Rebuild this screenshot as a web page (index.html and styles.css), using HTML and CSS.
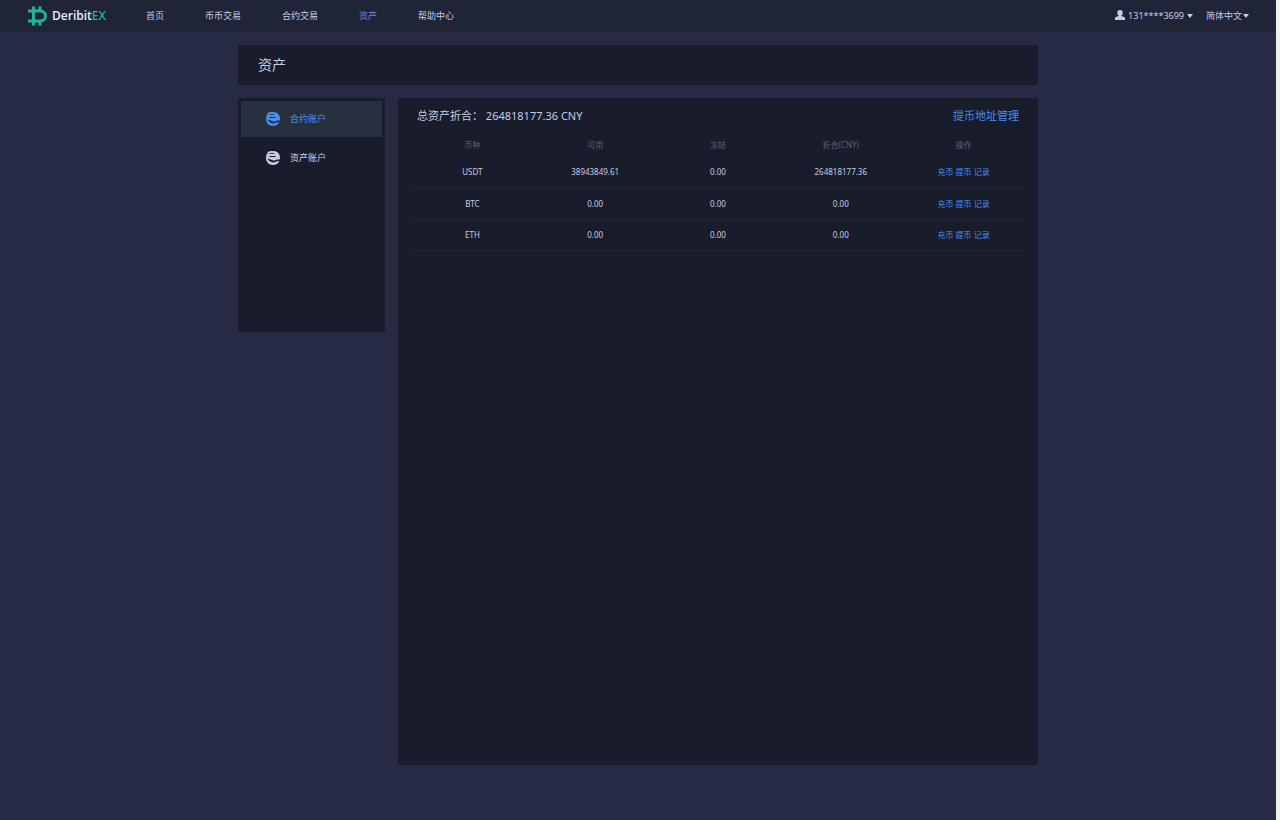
FILE: index.html
```html
<!DOCTYPE html>
<html lang="zh-CN">
<head>
<meta charset="utf-8">
<title>资产 - DeribitEX</title>
<link rel="stylesheet" href="styles.css">
</head>
<body>
<svg class="sprite" aria-hidden="true">
  <symbol id="coin" viewBox="0 0 14 14">
    <path fill="currentColor" fill-rule="evenodd" d="M1.500 1C3.500 0 6 0 8 .1c3.500.3 5.900 3 6 6.700L13.800 8.600 11.500 8.400C10 8.600 9.300 9.600 7.800 9.500 6.500 9.400 5.400 8.400 3.800 8.200L1.500 7.600ZM3.400 2.200v.8h5V2.200ZM3.400 5.100v.8h6.200V5.100Z"/>
    <path fill="currentColor" d="M.3 3.500 1.800 2.500V8C2.600 9.600 4.400 11.400 7 11.400c2 0 3-1.100 4.400-1.200h2C12.300 12.500 10.100 14 7 14 3 14 0 11 0 7Z"/>
  </symbol>
</svg>
<header class="topbar">
  <a class="logo" href="#">
    <svg class="logo-mark" viewBox="0 0 20 20" aria-hidden="true">
      <path fill="none" stroke="currentColor" stroke-width="3" d="M0 5h12.500a5 5 0 0 1 0 10H0M5.500 .5v19M12 .5v4M12 15.500v4"/>
    </svg>
    <span class="logo-text">Deribit<span class="logo-ex">EX</span></span>
  </a>
  <nav class="nav">
    <a href="#">首页</a>
    <a href="#">币币交易</a>
    <a href="#">合约交易</a>
    <a class="active" href="#">资产</a>
    <a href="#">帮助中心</a>
  </nav>
  <div class="tools">
    <button class="tool" type="button">
      <svg class="user" viewBox="0 0 10 10" aria-hidden="true"><path fill="currentColor" d="M5 0a2.700 2.700 0 0 1 2.700 2.900C7.700 4 7.200 5 6.400 5.500v.6L9 7c.7.300 1 .8 1 1.500V10H0V8.500C0 7.800.3 7.300 1 7l2.600-.9v-.6C2.800 5 2.300 4 2.300 2.900A2.700 2.700 0 0 1 5 0Z"/></svg>
      <span class="phone">131****3699</span>
      <span class="caret"></span>
    </button>
    <button class="tool language" type="button">简体中文<span class="caret"></span></button>
  </div>
</header>
<main class="page">
  <h1 class="title">资产</h1>
  <div class="columns">
    <aside class="side">
      <a class="side-link active" href="#"><svg class="coin"><use href="#coin"/></svg>合约账户</a>
      <a class="side-link" href="#"><svg class="coin"><use href="#coin"/></svg>资产账户</a>
    </aside>
    <section class="panel">
      <div class="summary">
        <p class="total">总资产折合： 264818177.36 CNY</p>
        <a href="#">提币地址管理</a>
      </div>
      <table class="assets">
        <thead>
          <tr><th>币种</th><th>可用</th><th>冻结</th><th>折合(CNY)</th><th>操作</th></tr>
        </thead>
        <tbody>
          <tr><td>USDT</td><td>38943849.61</td><td>0.00</td><td>264818177.36</td><td><a href="#">充币</a> <a href="#">提币</a> <a href="#">记录</a></td></tr>
          <tr><td>BTC</td><td>0.00</td><td>0.00</td><td>0.00</td><td><a href="#">充币</a> <a href="#">提币</a> <a href="#">记录</a></td></tr>
          <tr><td>ETH</td><td>0.00</td><td>0.00</td><td>0.00</td><td><a href="#">充币</a> <a href="#">提币</a> <a href="#">记录</a></td></tr>
        </tbody>
      </table>
    </section>
  </div>
</main>
</body>
</html>
```
FILE: styles.css
```css
* { box-sizing: border-box; }
body {
  margin: 0;
  min-height: 100vh;
  border-right: 4px solid #f0f0f0;
  background: #262a42;
  color: #c7cce6;
  font: 9px/16px "Noto Sans", "Noto Sans CJK SC", sans-serif;
}
a { color: inherit; text-decoration: none; }
.sprite { position: absolute; width: 0; height: 0; }

.topbar {
  display: flex;
  align-items: center;
  height: 32px;
  padding: 0 27px 0 28px;
  background: #202437;
}
.logo { display: flex; align-items: center; gap: 4px; width: 118px; color: #26b09a; }
.logo-mark { width: 20px; height: 20px; }
.logo-text { color: #e8f1f3; font: 600 12px/20px "Open Sans", sans-serif; }
.logo-ex { color: #26b09a; }
.nav { display: flex; gap: 41px; }
.nav .active { color: #6286f0; }
.tools { display: flex; gap: 13px; margin-left: auto; }
.tool {
  display: flex;
  align-items: center;
  gap: 3px;
  padding: 0;
  border: 0;
  background: none;
  color: inherit;
  font: inherit;
}
.language { gap: 1px; }
.user { width: 10px; height: 10px; margin-bottom: 2px; }
.caret {
  border: 3px solid transparent;
  border-top: 4px solid currentColor;
  border-bottom: 0;
}

.page { width: 100%; max-width: 800px; margin: 0 auto; padding: 13px 0 53px; }
.title {
  margin: 0 0 13px;
  padding: 10px 20px;
  background: #191c2a;
  font-size: 14px;
  line-height: 20px;
  font-weight: 400;
}
.columns { display: flex; align-items: flex-start; gap: 13px; }
.side { flex: 0 0 147px; min-height: 234px; padding: 3px; background: #191c2a; }
.side-link {
  display: flex;
  align-items: center;
  gap: 10px;
  height: 36px;
  margin-bottom: 3px;
  padding-left: 25px;
}
.side-link.active { background: #28303f; color: #4b8ef0; }
.coin { width: 14px; height: 14px; }
.panel { flex: 1; min-height: 667px; padding: 8px 13px; background: #191c2a; }
.summary {
  display: flex;
  justify-content: space-between;
  padding: 0 6px;
  font-size: 11px;
  line-height: 20px;
}
.summary a, .assets a { color: #4b8ef0; }
.total { margin: 0; }

.assets {
  width: 100%;
  margin-top: 7px;
  border-collapse: collapse;
  table-layout: fixed;
  font-size: 8px;
  line-height: 12px;
  text-align: center;
}
.assets th { height: 24px; padding: 0; color: #5b617a; font-weight: 400; }
.assets td { height: 31px; padding: 0; border-bottom: 1px solid #1d2539; }
```
